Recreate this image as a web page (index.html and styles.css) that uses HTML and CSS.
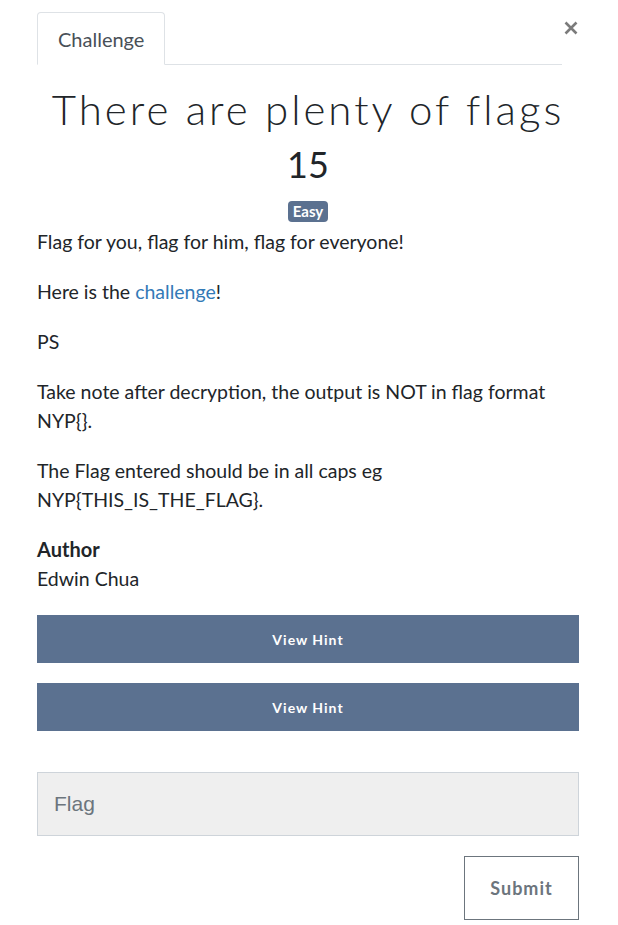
FILE: index.html
```html
<!DOCTYPE html>
<html lang="en">
<head>
<meta charset="utf-8">
<title>Challenge</title>
<link rel="stylesheet" href="styles.css">
</head>
<body>
<div class="modal">
  <div class="modal-head">
    <nav class="tabs">
      <a class="tab active">Challenge</a>
    </nav>
    <button class="close" aria-label="Close">
      <svg width="14" height="14" viewBox="0 0 14 14"><path d="M1.5 1.5 L12.5 12.5 M12.5 1.5 L1.5 12.5" stroke="#7b7b7b" stroke-width="2.6" stroke-linecap="butt"/></svg>
    </button>
  </div>
  <h2 class="title">There are plenty of flags</h2>
  <h3 class="value">15</h3>
  <div class="badge-row"><span class="badge">Easy</span></div>
  <div class="desc">
    <p>Flag for you, flag for him, flag for everyone!</p>
    <p>Here is the <a class="link" href="#">challenge</a>!</p>
    <p>PS</p>
    <p>Take note after decryption, the output is NOT in flag format NYP{}.</p>
    <p>The Flag entered should be in all caps eg NYP{THIS_IS_THE_FLAG}.</p>
  </div>
  <div class="author">
    <h4 class="author-label">Author</h4>
    <div class="author-name">Edwin Chua</div>
  </div>
  <div class="hints">
    <button class="hint-btn">View Hint</button>
    <button class="hint-btn">View Hint</button>
  </div>
  <div class="flag-form">
    <input class="flag-input" type="text" placeholder="Flag">
    <div class="submit-row"><button class="submit-btn">Submit</button></div>
  </div>
</div>
</body>
</html>
```
FILE: styles.css
```css
html, body {
  margin: 0;
  padding: 0;
  background: #ffffff;
}
body {
  font-family: "Lato", "Liberation Sans", sans-serif;
  color: #212529;
}
.modal {
  width: 542px;
  margin-left: 37px;
  padding-top: 12px;
}
.modal-head {
  display: flex;
  align-items: flex-start;
}
.tabs {
  flex: 1;
  display: flex;
  border-bottom: 1px solid #dee2e6;
}
.tab {
  display: block;
  padding: 11px 20px 10px 20px;
  font-size: 20px;
  line-height: 30px;
  color: #495057;
  border: 1px solid #dee2e6;
  border-bottom-color: #ffffff;
  border-radius: 4px 4px 0 0;
  margin-bottom: -1px;
  background: #fff;
}
.close {
  width: 17px;
  height: 30px;
  padding: 0;
  margin-top: 1px;
  border: 0;
  background: transparent;
  display: flex;
  align-items: center;
  justify-content: center;
}
.close svg { display: block; }
.title {
  margin: 20px 0 0 0;
  text-align: center;
  font-family: "Lato", sans-serif;
  font-weight: 300;
  font-size: 42px;
  line-height: 48px;
  letter-spacing: 3px;
  color: #212529;
}
.value {
  margin: 10px 0 0 0;
  text-align: center;
  font-weight: 400;
  font-size: 36px;
  line-height: 43px;
  color: #212529;
}
.badge-row {
  display: flex;
  justify-content: center;
  margin-top: 15px;
}
.badge {
  display: inline-block;
  background: #5b7190;
  color: #ffffff;
  font-weight: 700;
  font-size: 15px;
  line-height: 21px;
  padding: 0 5px;
  border-radius: 4px;
}
.desc {
  margin-top: 5px;
  font-size: 19.5px;
  line-height: 29px;
}
.desc p {
  margin: 0 0 21px 0;
}
.link {
  color: #337ab7;
  text-decoration: none;
}
.author-label {
  margin: 0;
  font-size: 20px;
  font-weight: 700;
  line-height: 29px;
}
.author-name {
  margin-top: 0;
  font-size: 19.5px;
  line-height: 29px;
}
.hints {
  display: flex;
  flex-direction: column;
  gap: 20px;
  margin-top: 22px;
}
.hint-btn {
  height: 48px;
  border: 0;
  background: #5b7190;
  color: #ffffff;
  font-family: "Lato", sans-serif;
  font-weight: 700;
  font-size: 14px;
  letter-spacing: 1px;
}
.flag-form {
  margin-top: 41px;
}
.flag-input {
  display: block;
  box-sizing: border-box;
  width: 100%;
  height: 64px;
  padding: 0 16px;
  border: 1px solid #ced4da;
  background: #efefef;
  font-family: "Liberation Sans", Arial, sans-serif;
  font-size: 21px;
  color: #495057;
}
.flag-input::placeholder {
  color: #6c757d;
  opacity: 1;
}
.submit-row {
  display: flex;
  justify-content: flex-end;
  margin-top: 20px;
}
.submit-btn {
  width: 115px;
  height: 64px;
  background: #ffffff;
  border: 1px solid #6c757d;
  color: #6c757d;
  font-family: "Lato", sans-serif;
  font-weight: 700;
  font-size: 18px;
  letter-spacing: 1px;
}
```
